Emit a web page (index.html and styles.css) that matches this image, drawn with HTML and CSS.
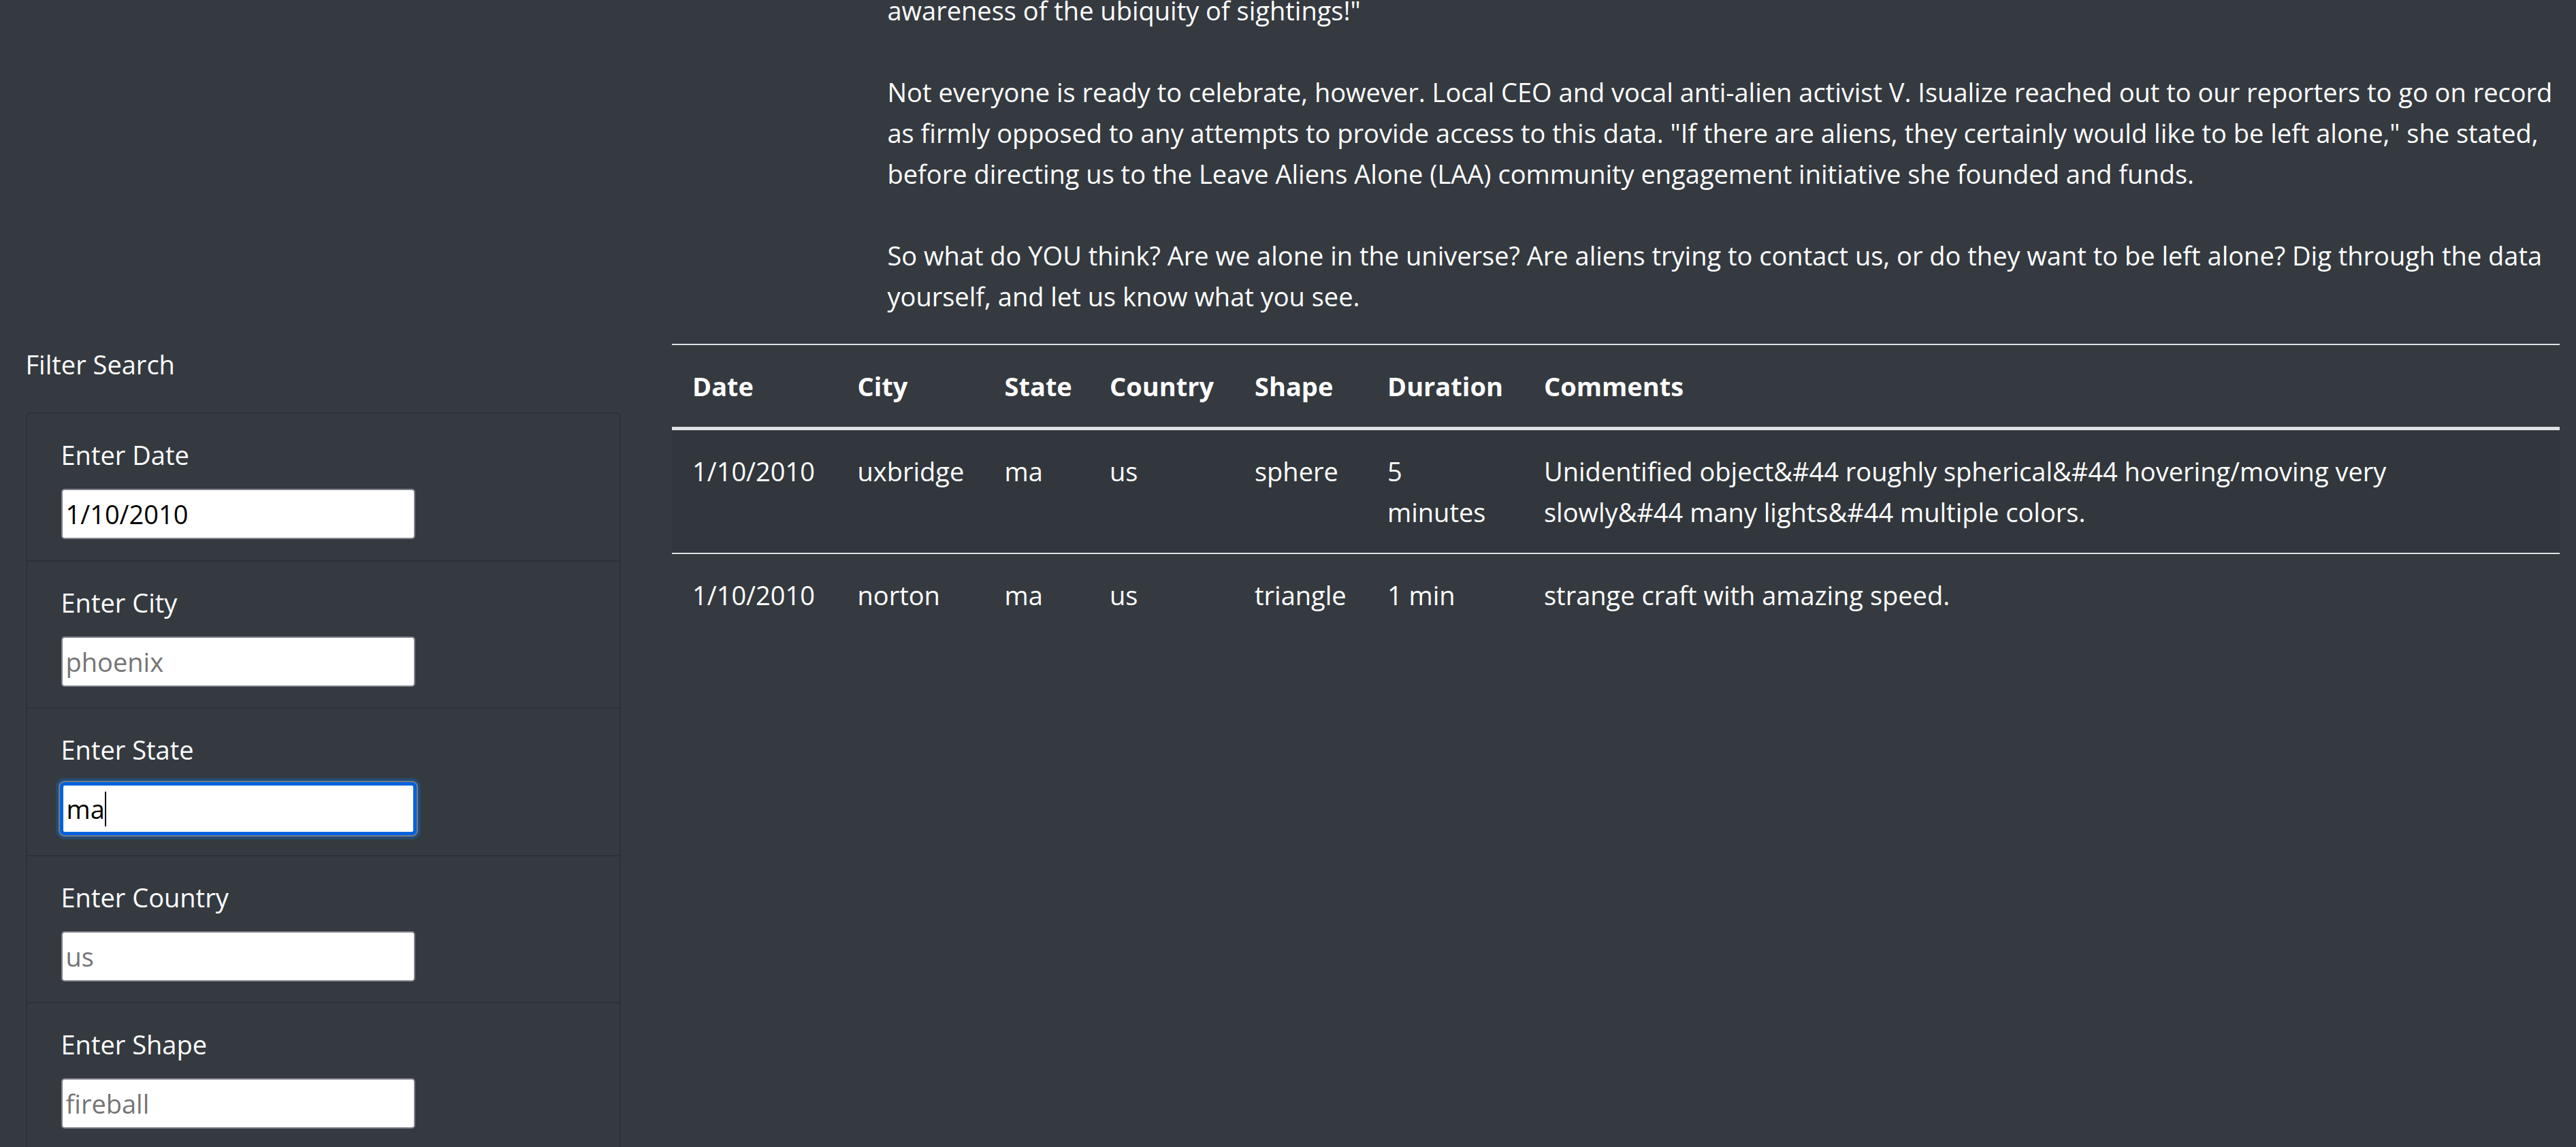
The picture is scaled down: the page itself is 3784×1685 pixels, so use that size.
FILE: index.html
```html
<!DOCTYPE html>
<html lang="en">
<head>
<meta charset="utf-8">
<title>UFO Sightings</title>
<link rel="stylesheet" href="styles.css">
</head>
<body>
<div class="page">
  <section class="article">
    <p class="story">awareness of the ubiquity of sightings!"<br><br>Not everyone is ready to celebrate, however. Local CEO and vocal anti-alien activist V. Isualize reached out to our reporters to go on record as firmly opposed to any attempts to provide access to this data. "If there are aliens, they certainly would like to be left alone," she stated, before directing us to the Leave Aliens Alone (LAA) community engagement initiative she founded and funds.<br><br>So what do YOU think? Are we alone in the universe? Are aliens trying to contact us, or do they want to be left alone? Dig through the data yourself, and let us know what you see.</p>
  </section>
  <div class="main">
    <aside class="sidebar">
      <p class="filter-title">Filter Search</p>
      <ul class="filters">
        <li class="filter">
          <label for="datetime">Enter Date</label>
          <input class="field-input" id="datetime" type="text" value="1/10/2010">
        </li>
        <li class="filter">
          <label for="city">Enter City</label>
          <input class="field-input" id="city" type="text" placeholder="phoenix">
        </li>
        <li class="filter">
          <label for="state">Enter State</label>
          <div class="field">
            <input class="field-input is-focused" id="state" type="text" value="ma">
            <span class="caret"></span>
          </div>
        </li>
        <li class="filter">
          <label for="country">Enter Country</label>
          <input class="field-input" id="country" type="text" placeholder="us">
        </li>
        <li class="filter">
          <label for="shape">Enter Shape</label>
          <input class="field-input" id="shape" type="text" placeholder="fireball">
        </li>
      </ul>
    </aside>
    <div class="results">
      <table class="ufo-table">
        <colgroup>
          <col class="c-date">
          <col class="c-city">
          <col class="c-state">
          <col class="c-country">
          <col class="c-shape">
          <col class="c-duration">
          <col class="c-comments">
        </colgroup>
        <thead>
          <tr>
            <th>Date</th>
            <th>City</th>
            <th>State</th>
            <th>Country</th>
            <th>Shape</th>
            <th>Duration</th>
            <th>Comments</th>
          </tr>
        </thead>
        <tbody>
          <tr>
            <td>1/10/2010</td>
            <td>uxbridge</td>
            <td>ma</td>
            <td>us</td>
            <td>sphere</td>
            <td>5 minutes</td>
            <td class="comment">Unidentified object&amp;#44 roughly spherical&amp;#44 hovering/moving very slowly&amp;#44 many lights&amp;#44 multiple colors.</td>
          </tr>
          <tr>
            <td>1/10/2010</td>
            <td>norton</td>
            <td>ma</td>
            <td>us</td>
            <td>triangle</td>
            <td>1 min</td>
            <td class="comment">strange craft with amazing speed.</td>
          </tr>
        </tbody>
      </table>
    </div>
  </div>
</div>
</body>
</html>
```
FILE: styles.css
```css
* {
  box-sizing: border-box;
}

html,
body {
  margin: 0;
  padding: 0;
  overflow: hidden;
}

body {
  background: #343a40;
  color: #fff;
  font-family: "Open Sans", "Noto Sans", sans-serif;
  font-size: 38px;
  line-height: 60px;
  width: 3784px;
  height: 1685px;
}

.article {
  margin-top: -15px;
  padding: 0 23.5px 0 1303.5px;
}

.story {
  margin: 0 0 40px;
}

.main {
  display: grid;
  grid-template-columns: 949.5px 1fr;
  align-items: start;
}

.sidebar {
  padding: 0 37.5px;
}

.results {
  padding: 0 24px 0 37.5px;
}

.filter-title {
  margin: 0 0 41px;
}

.filters {
  list-style: none;
  margin: 0;
  padding: 0;
  border: 2px solid rgba(0, 0, 0, 0.125);
  border-radius: 6px;
}

.filter {
  padding: 30px 50px 30.5px;
}

.filter + .filter {
  border-top: 2px solid rgba(0, 0, 0, 0.125);
}

.filter label {
  display: block;
  margin-bottom: 20px;
  line-height: 60px;
}

.field {
  position: relative;
  width: 520px;
}

.field-input {
  display: block;
  width: 520px;
  height: 74px;
  margin: 0;
  padding: 0 5px;
  border: 2.5px solid #80808c;
  border-radius: 5px;
  background: #fff;
  color: #000;
  font: inherit;
  line-height: 60px;
  outline: none;
}

.field-input::placeholder {
  color: #757575;
  opacity: 1;
}

.field-input.is-focused {
  border: 3px solid #0062e0;
  box-shadow: 0 0 0 2px #0062e0, 0 0 0 4px #767d84, 0 0 0 8px rgba(0, 123, 255, 0.25);
}

.caret {
  position: absolute;
  left: 64.5px;
  top: 12px;
  width: 2px;
  height: 51px;
  background: #000;
}

.ufo-table {
  width: 100%;
  table-layout: fixed;
  border-collapse: separate;
  border-spacing: 0;
  color: #fff;
}

.c-date { width: 242.5px; }
.c-city { width: 216px; }
.c-state { width: 154.5px; }
.c-country { width: 213px; }
.c-shape { width: 195px; }
.c-duration { width: 230px; }

.ufo-table th,
.ufo-table td {
  padding: 30px;
  text-align: left;
  vertical-align: top;
}

.ufo-table td.comment {
  padding-right: 70px;
}

.ufo-table thead th {
  font-weight: 700;
  vertical-align: bottom;
  border-top: 2px solid #dee2e6;
  border-bottom: 5px solid #dee2e6;
}

.ufo-table tbody tr + tr td {
  border-top: 2px solid #dee2e6;
}

.ufo-table tbody tr:nth-child(odd) {
  background: rgba(0, 0, 0, 0.05);
}
```
